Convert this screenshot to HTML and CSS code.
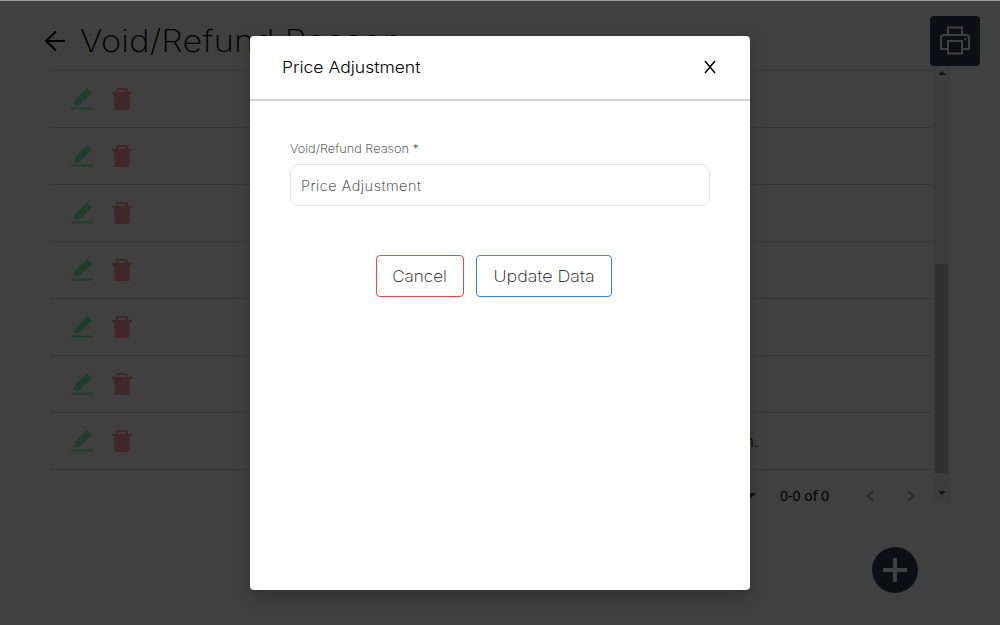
FILE: index.html
```
<!DOCTYPE html>
<html lang="en">
<head>
<meta charset="utf-8">
<title>Void/Refund Reason</title>
<link rel="stylesheet" href="styles.css">
</head>
<body>
<svg class="symbols" aria-hidden="true">
  <symbol id="edit" viewBox="0 0 24 24"><path fill="currentColor" d="M17.1 1.200 22 5.900 9.200 18.300H4.600l-.6-1 1.200-4.600zM2.200 20.600h19.600q1 0 1 1t-1 1H2.200q-1 0-1-1t1-1z"/></symbol>
  <symbol id="trash" viewBox="0 0 24 24"><path fill="currentColor" fill-rule="evenodd" d="M6 4.800V3q0-2 2-2h8q2 0 2 2v1.800h4V7h-2l-.5 14q-.1 2-2 2h-11q-1.900 0-2-2L4 7H2V4.800zm2 0h8V3H8z"/></symbol>
</svg>
<div class="page">
  <header class="header">
    <svg class="back" viewBox="0 0 22 22"><path d="M21 11H2M12 1.500 2 11l10 9.500"/></svg>
    <h1 class="title">Void/Refund Reason</h1>
    <button class="print" aria-label="Print"><svg viewBox="0 0 30 30"><path d="M8 9V1.500h14V9M8 23H1V12q0-3 3-3h22q3 0 3 3v11h-7"/><path d="M8 15h14v12.500H8z"/><path d="M24 13h2"/></svg></button>
  </header>
  <div class="table">
    <div class="rows">
      <div class="row"><svg><use href="#edit"/></svg><svg class="delete"><use href="#trash"/></svg></div>
      <div class="row"><svg><use href="#edit"/></svg><svg class="delete"><use href="#trash"/></svg></div>
      <div class="row"><svg><use href="#edit"/></svg><svg class="delete"><use href="#trash"/></svg></div>
      <div class="row"><svg><use href="#edit"/></svg><svg class="delete"><use href="#trash"/></svg></div>
      <div class="row"><svg><use href="#edit"/></svg><svg class="delete"><use href="#trash"/></svg></div>
      <div class="row"><svg><use href="#edit"/></svg><svg class="delete"><use href="#trash"/></svg></div>
      <div class="row"><svg><use href="#edit"/></svg><svg class="delete"><use href="#trash"/></svg><span class="reason">n.</span></div>
      <div class="pager">
        <svg class="caret" viewBox="0 0 10 5"><path d="M0 0h10L5 5z"/></svg>
        <span class="range">0-0 of 0</span>
        <svg class="chevron" viewBox="0 0 8 12"><path d="M7 1 2 6l5 5"/></svg>
        <svg class="chevron" viewBox="0 0 8 12"><path d="m1 1 5 5-5 5"/></svg>
      </div>
    </div>
    <div class="scrollbar">
      <svg viewBox="0 0 8 4"><path d="M0 4h8L4 0z"/></svg>
      <div class="thumb"></div>
      <svg viewBox="0 0 8 4"><path d="M0 0h8L4 4z"/></svg>
    </div>
  </div>
  <button class="add" aria-label="Add"><svg viewBox="0 0 24 24"><path d="M12 0v24M0 12h24"/></svg></button>
</div>
<div class="overlay">
  <section class="modal">
    <div class="modal-head">
      <h2 class="modal-title">Price Adjustment</h2>
      <svg class="close" viewBox="0 0 12 14"><path d="m1 1 10 12M11 1 1 13"/></svg>
    </div>
    <div class="modal-body">
      <label class="label" for="reason">Void/Refund Reason *</label>
      <input class="input" id="reason" value="Price Adjustment">
      <div class="actions">
        <button class="button cancel"><span class="wide">Cancel</span></button>
        <button class="button update"><span class="wide">Update Data</span></button>
      </div>
    </div>
  </section>
</div>
</body>
</html>
```
FILE: styles.css
```
* { box-sizing: border-box; }
body { margin: 0; width: 1000px; height: 625px; overflow: hidden; background: #fff; color: #000; font-family: Inter, sans-serif; }
button { padding: 0; font: inherit; }
svg { flex: none; fill: none; }
.symbols { position: absolute; width: 0; height: 0; }
.page { height: 625px; display: flex; flex-direction: column; padding: 16px 20px 0 44px; }
.header { height: 50px; display: flex; align-items: center; }
.back { width: 22px; height: 22px; stroke: #000; stroke-width: 2; }
.title { margin: 0 0 0 14px; font-size: 31px; font-weight: 200; letter-spacing: .2px; line-height: 50px; white-space: nowrap; transform: scaleX(1.105); transform-origin: left; }
.print { width: 50px; height: 50px; margin-left: auto; display: grid; place-items: center; border: 0; border-radius: 4px; background: #334155; }
.print svg { width: 30px; height: 30px; stroke: #fff; stroke-width: 2; }
.table { display: flex; height: 436px; margin-left: 6px; }
.rows { width: 883px; padding-top: 4px; }
.row { height: 57px; display: flex; align-items: center; gap: 16px; padding-left: 20px; border-top: 1px solid #dcdcdc; color: #78f4b0; }
.row svg { width: 24px; height: 24px; }
.row .delete { color: #ffa0a0; }
.reason { margin-left: 595px; width: 30px; font-size: 15px; font-weight: 300; color: #000; }
.pager { height: 52px; border-top: 1px solid #dcdcdc; display: flex; align-items: center; padding-left: 696px; }
.caret { width: 10px; height: 5px; fill: #444; }
.range { width: 90px; margin-left: 24px; font: 14px "Noto Sans", sans-serif; }
.chevron { width: 8px; height: 12px; stroke: #a8a8a8; stroke-width: 2; }
.chevron + .chevron { margin-left: 33px; }
.range + .chevron { margin-left: -4px; }
.scrollbar { width: 17px; display: flex; flex-direction: column; align-items: center; padding: 5px 0 7px; background: #f4f4f4; }
.scrollbar svg { width: 8px; height: 4px; fill: #505050; }
.thumb { width: 13px; height: 209px; margin: 189px 0 auto; background: #c1c1c1; }
.add { width: 46px; height: 46px; display: grid; place-items: center; align-self: flex-end; margin: 45px 62px 0 0; border: 0; border-radius: 50%; background: #334155; }
.add svg { width: 24px; height: 24px; stroke: #fff; stroke-width: 4; }
.overlay { position: absolute; inset: 0; display: flex; justify-content: center; padding-top: 35px; background: rgba(0,0,0,.75); border-top: 1px solid #979b99; }
.modal { width: 500px; height: 554px; border-radius: 4px; background: #fff; box-shadow: 0 6px 16px rgba(0,0,0,.25); }
.modal-head { height: 65px; display: flex; align-items: center; justify-content: space-between; padding: 0 34px 1px 32px; border-bottom: 2px solid #d4d4d4; }
.modal-title { margin: 0; font-size: 16px; font-weight: 350; transform: scaleX(1.095); transform-origin: left; }
.close { width: 12px; height: 14px; stroke: #000; stroke-width: 1.5; }
.modal-body { padding: 39px 40px; }
.label { display: block; width: max-content; height: 24px; line-height: 18px; font-size: 12px; font-weight: 250; color: #222; transform: scaleX(1.065); transform-origin: left; }
.input { display: block; width: 420px; height: 42px; padding: 0 10px; border: 1px solid #e5e5e9; border-radius: 8px; background: #fff; font: 250 14.5px Inter, sans-serif; letter-spacing: .53px; color: #222; }
.actions { display: flex; gap: 12px; margin: 49px 0 0 86px; }
.button { height: 42px; border: 1px solid; border-radius: 4px; background: #fff; font-size: 16px; font-weight: 250; color: #111; }
.wide { display: inline-block; transform: scaleX(1.12); }
.cancel { width: 88px; border-color: #ef4444; }
.cancel .wide { transform: scaleX(1.07); }
.update { width: 136px; border-color: #3b82f6; }
```
